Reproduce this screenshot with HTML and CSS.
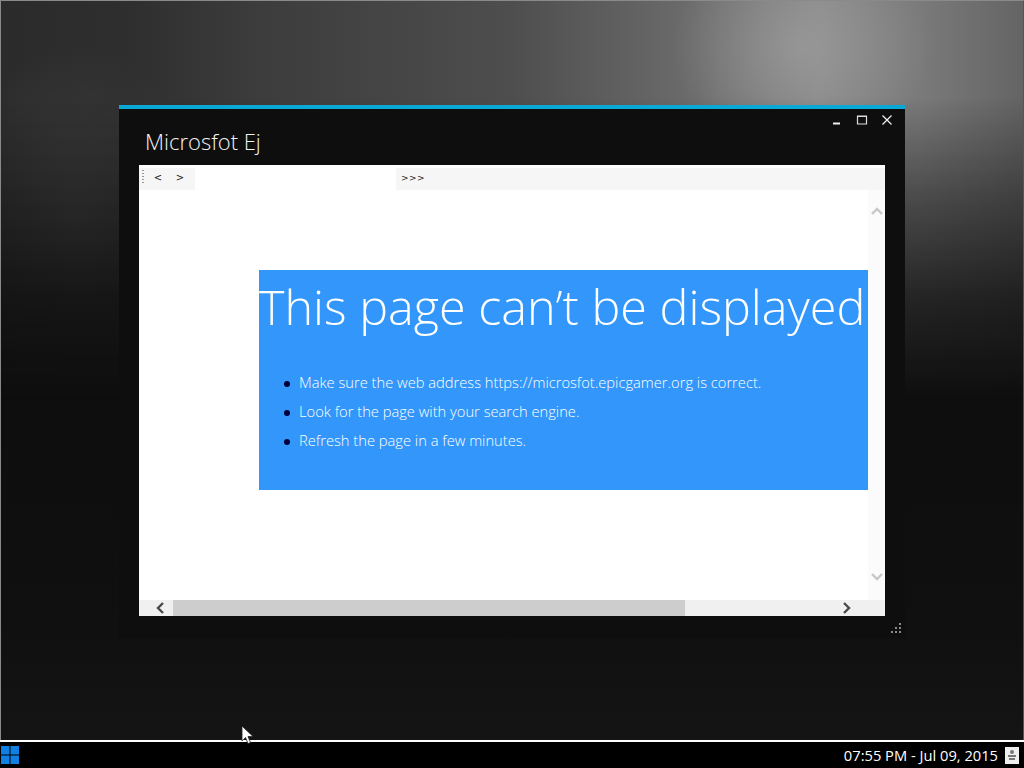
FILE: index.html
```html
<!DOCTYPE html>
<html>
<head>
    <title>Microsfot Ej</title>
    <link rel="stylesheet" href="styles.css">
</head>
<body>
    <div class="desktop">
        <div class="window">
            <div class="window-controls">
                <svg class="ctrl" width="12" height="12" viewBox="0 0 12 12"><path d="M2 9.5h7" stroke="#eee" stroke-width="2"/></svg>
                <svg class="ctrl" width="12" height="12" viewBox="0 0 12 12"><path d="M1.5 2v8h9V2z M1.5 2.5h9" fill="none" stroke="#ddd" stroke-width="1.2"/></svg>
                <svg class="ctrl" width="12" height="12" viewBox="0 0 12 12"><path d="M1.5 1.5l9 9M10.5 1.5l-9 9" fill="none" stroke="#eee" stroke-width="1.3"/></svg>
            </div>
            <div class="window-title">Microsfot Ej</div>
            <div class="browser">
                <div class="toolbar">
                    <span class="grip"></span>
                    <button class="nav-btn">&lt;</button>
                    <button class="nav-btn">&gt;</button>
                    <div class="address"></div>
                    <span class="more">&gt;&gt;&gt;</span>
                </div>
                <div class="view">
                    <div class="page">
                        <div class="error-box">
                            <h1>This page can’t be displayed</h1>
                            <ul>
                                <li>Make sure the web address https://microsfot.epicgamer.org is correct.</li>
                                <li>Look for the page with your search engine.</li>
                                <li>Refresh the page in a few minutes.</li>
                            </ul>
                        </div>
                    </div>
                    <div class="vscroll">
                        <svg width="14" height="10" viewBox="0 0 14 10"><path d="M2 8l5-5 5 5" fill="none" stroke="#c8c8c8" stroke-width="2.4"/></svg>
                        <svg width="14" height="10" viewBox="0 0 14 10"><path d="M2 2l5 5 5-5" fill="none" stroke="#c8c8c8" stroke-width="2.4"/></svg>
                    </div>
                </div>
                <div class="hscroll">
                    <svg class="arrow-left" width="10" height="14" viewBox="0 0 10 14"><path d="M8 2L3 7l5 5" fill="none" stroke="#4a4a4a" stroke-width="2.4"/></svg>
                    <div class="track"><div class="thumb"></div></div>
                    <svg class="arrow-right" width="10" height="14" viewBox="0 0 10 14"><path d="M2 2l5 5-5 5" fill="none" stroke="#4a4a4a" stroke-width="2.4"/></svg>
                </div>
            </div>
            <svg class="resize" width="12" height="12" viewBox="0 0 12 12" fill="#8a8a8a">
                <rect x="9" y="1" width="2" height="2"/>
                <rect x="5" y="5" width="2" height="2"/><rect x="9" y="5" width="2" height="2"/>
                <rect x="1" y="9" width="2" height="2"/><rect x="5" y="9" width="2" height="2"/><rect x="9" y="9" width="2" height="2"/>
            </svg>
        </div>
        <svg class="cursor" width="14" height="20" viewBox="0 0 14 20"><path d="M1 1v15l3.5-3.5 2.5 6 2.5-1-2.5-6H12z" fill="#fff" stroke="#222" stroke-width="0.8"/></svg>
    </div>
    <div class="taskbar">
        <svg class="start" width="18" height="18" viewBox="0 0 18 18" fill="#1080e4">
            <rect x="0" y="0" width="8.5" height="8.5"/><rect x="9.5" y="0" width="8.5" height="8.5"/>
            <rect x="0" y="9.5" width="8.5" height="8.5"/><rect x="9.5" y="9.5" width="8.5" height="8.5"/>
        </svg>
        <div class="tray">
            <span class="clock">07:55 PM - Jul 09, 2015</span>
            <span class="tray-icon">
                <svg width="10" height="12" viewBox="0 0 10 12" fill="#777"><circle cx="5" cy="3" r="2"/><rect x="1" y="6" width="8" height="2"/><rect x="2" y="9" width="6" height="2"/></svg>
            </span>
        </div>
    </div>
</body>
</html>
```

FILE: styles.css
```css
* {
    margin: 0;
    padding: 0;
    box-sizing: border-box;
}

html, body {
    width: 1024px;
    height: 768px;
    overflow: hidden;
}

body {
    display: flex;
    flex-direction: column;
    font-family: "Open Sans", sans-serif;
    background-color: #000;
}

.desktop {
    position: relative;
    flex: 1;
    border: 1px solid #8a8a8a;
    border-bottom: none;
    border-right-color: #555;
    background-color: #101010;
    background-image: linear-gradient(#0e0e0e 60%, #101010 85%, #141414 100%);
}

/* light from the top of the wallpaper, fades out going down */
.desktop::before {
    content: "";
    position: absolute;
    left: 0;
    top: 0;
    width: 100%;
    height: 400px;
    background-image:
        radial-gradient(ellipse 130px 110px at 800px 45px, rgba(165, 165, 165, 0.55) 0%, rgba(150, 150, 150, 0) 100%),
        radial-gradient(ellipse 130px 170px at 75px 215px, rgba(70, 70, 70, 0.7) 0%, rgba(60, 60, 60, 0) 100%),
        linear-gradient(90deg, #2b2b2b 0%, #2e2e2e 12%, #3c3c3c 25%, #4e4e4e 50%, #6c6c6c 68%, #878787 80%, #7a7a7a 90%, #646464 100%);
    -webkit-mask-image: linear-gradient(#000 0%, #000 24%, rgba(0, 0, 0, 0.55) 50%, rgba(0, 0, 0, 0.2) 75%, transparent 100%);
    mask-image: linear-gradient(#000 0%, #000 24%, rgba(0, 0, 0, 0.55) 50%, rgba(0, 0, 0, 0.2) 75%, transparent 100%);
}

.window {
    position: absolute;
    left: 118px;
    top: 104px;
    width: 786px;
    height: 534px;
    padding: 0 20px;
    border-top: 4px solid #0aa8d4;
    background-color: #0e0e0e;
}

.window-controls {
    position: absolute;
    top: 5px;
    right: 12px;
    display: flex;
    gap: 13px;
}

.ctrl {
    display: block;
}

.window-title {
    height: 56px;
    padding: 17px 0 0 6px;
    color: #f2f2f2;
    font-size: 22px;
    font-weight: 300;
    line-height: 30px;
}

.browser {
    width: 746px;
    height: 451px;
    display: flex;
    flex-direction: column;
    background-color: #fff;
}

.toolbar {
    display: flex;
    align-items: center;
    height: 25px;
    background-image: linear-gradient(#fff 3px, #f6f6f6 3px);
    font-family: "DejaVu Sans", sans-serif;
    font-size: 9px;
    color: #222;
}

.grip {
    width: 2px;
    height: 15px;
    margin: 0 3px 0 3px;
    background-image: linear-gradient(#999 50%, transparent 50%);
    background-size: 2px 3px;
}

.nav-btn {
    width: 22px;
    height: 22px;
    border: none;
    background: none;
    color: #222;
    font-family: "DejaVu Sans", sans-serif;
    font-size: 10px;
}

.address {
    width: 201px;
    height: 25px;
    margin-left: 4px;
    background-color: #fff;
}

.more {
    margin-left: 5px;
    letter-spacing: 0.4px;
}

.view {
    flex: 1;
    display: flex;
    min-height: 0;
}

.page {
    flex: 1;
    padding: 80px 0 0 120px;
}

.error-box {
    width: 609px;
    height: 220px;
    background-color: #3296fa;
    color: #fff;
}

.error-box h1 {
    font-size: 48.5px;
    font-weight: 300;
    line-height: 72px;
    white-space: nowrap;
}

.error-box ul {
    margin-top: 26px;
    padding-left: 40px;
    list-style: none;
}

.error-box li {
    position: relative;
    height: 29px;
    font-size: 14.7px;
    font-weight: 300;
    line-height: 29px;
    white-space: nowrap;
}

.error-box li::before {
    content: "";
    position: absolute;
    left: -15px;
    top: 13px;
    width: 6px;
    height: 6px;
    border-radius: 50%;
    background-color: #00003c;
}

.vscroll {
    width: 17px;
    display: flex;
    flex-direction: column;
    justify-content: space-between;
    align-items: center;
    padding: 16px 0 18px;
    background-color: #fbfbfb;
}

.hscroll {
    display: flex;
    align-items: center;
    height: 16px;
    background-color: #f0f0f0;
}

.arrow-left {
    margin-left: 16px;
}

.track {
    width: 664px;
    height: 16px;
    margin-left: 8px;
}

.thumb {
    width: 512px;
    height: 16px;
    background-color: #cdcdcd;
}

.arrow-right {
    margin-left: 5px;
}

.resize {
    position: absolute;
    right: 3px;
    bottom: 5px;
}

.cursor {
    position: absolute;
    left: 240px;
    top: 724px;
}

.taskbar {
    display: flex;
    align-items: center;
    justify-content: space-between;
    height: 28px;
    border-top: 2px solid #fff;
    background-color: #000;
}

.start {
    margin-left: 1px;
}

.tray {
    display: flex;
    align-items: center;
}

.clock {
    color: #fff;
    font-family: "Open Sans", sans-serif;
    font-size: 14.7px;
    white-space: nowrap;
}

.tray-icon {
    display: flex;
    align-items: center;
    justify-content: center;
    width: 14px;
    height: 17px;
    margin: 0 5px 0 7px;
    background-color: #eee;
}
```
